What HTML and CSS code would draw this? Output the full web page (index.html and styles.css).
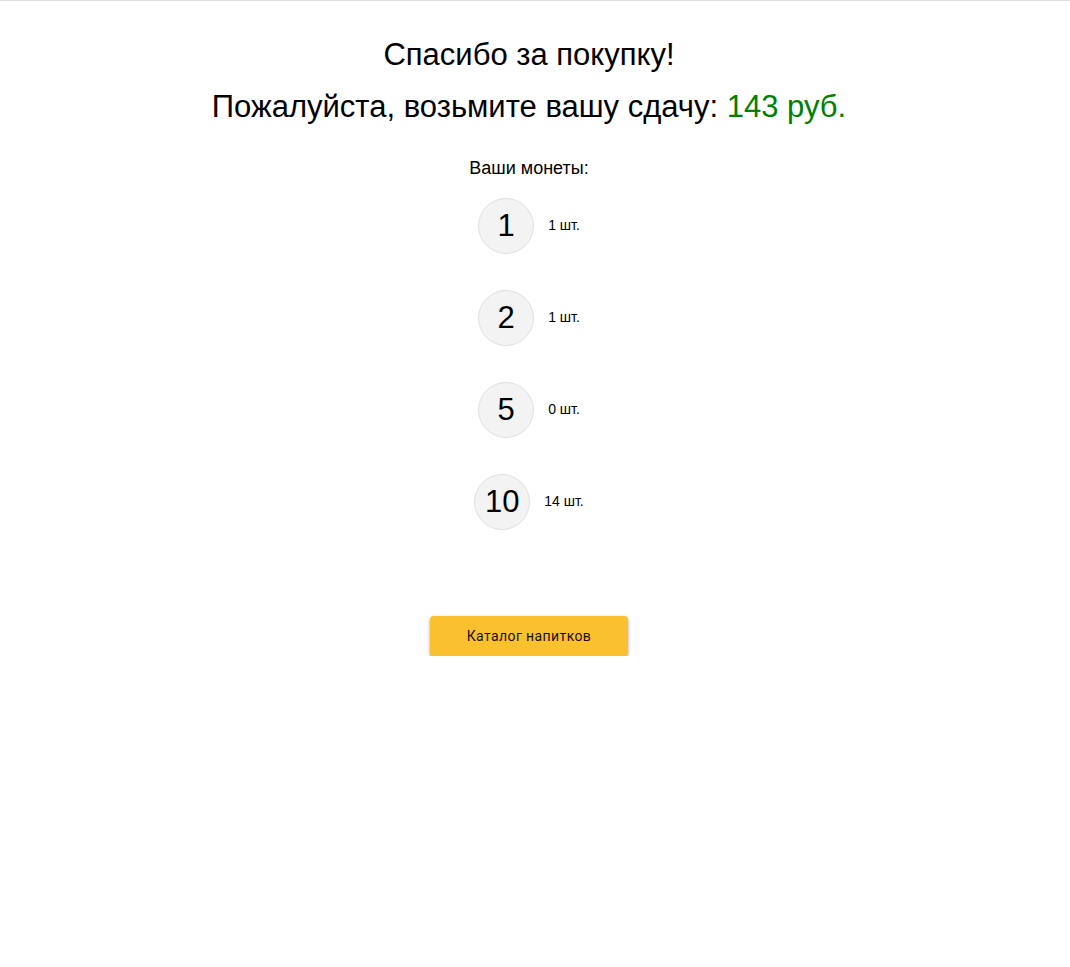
FILE: index.html
```html
<!DOCTYPE html>
<html lang="ru">
<head>
<meta charset="utf-8">
<title>Спасибо за покупку</title>
<link rel="stylesheet" href="styles.css">
</head>
<body>
<div class="topline"></div>
<main class="page">
  <h1 class="title">Спасибо за покупку!</h1>
  <h2 class="change">Пожалуйста, возьмите вашу сдачу: <span class="sum">143 руб.</span></h2>
  <p class="coins-label">Ваши монеты:</p>
  <ul class="coins">
    <li class="coin-row"><span class="coin">1</span><span class="count">1 шт.</span></li>
    <li class="coin-row"><span class="coin">2</span><span class="count">1 шт.</span></li>
    <li class="coin-row"><span class="coin">5</span><span class="count">0 шт.</span></li>
    <li class="coin-row"><span class="coin">10</span><span class="count">14 шт.</span></li>
  </ul>
  <button class="btn" type="button">Каталог напитков</button>
</main>
</body>
</html>
```
FILE: styles.css
```css
html, body {
  margin: 0;
  padding: 0;
  background: #fff;
}
body {
  font-family: "Liberation Sans", Arial, sans-serif;
  color: #000;
}
.topline {
  height: 1px;
  background: #e0e0e0;
}
.page {
  display: flex;
  flex-direction: column;
  align-items: center;
  padding: 0 12px 0 0;
}
.title {
  margin: 36px 0 0;
  font-size: 31px;
  font-weight: normal;
  line-height: 36px;
}
.change {
  margin: 16px 0 0;
  font-size: 31px;
  font-weight: normal;
  line-height: 36px;
}
.sum {
  color: #008000;
}
.coins-label {
  margin: 32px 0 0;
  font-size: 18px;
  line-height: 22px;
}
.coins {
  list-style: none;
  margin: 19px 0 0;
  padding: 0;
  display: flex;
  flex-direction: column;
  align-items: center;
  gap: 36px;
}
.coin-row {
  display: flex;
  align-items: center;
  gap: 14px;
}
.coin {
  width: 54px;
  height: 54px;
  border-radius: 50%;
  background: #f3f3f3;
  border: 1px solid #e0e0e0;
  display: flex;
  align-items: center;
  justify-content: center;
  font-size: 31px;
}
.count {
  font-size: 14px;
  margin-bottom: 2px;
}
.btn {
  margin-top: 86px;
  width: 198px;
  height: 40px;
  border: none;
  border-radius: 4px;
  background: #fbc02d;
  color: #111;
  font-family: Roboto, "Liberation Sans", sans-serif;
  font-size: 14px;
  letter-spacing: 0.4px;
  box-shadow: 0 2px 3px rgba(0,0,0,0.3), 0 1px 5px rgba(0,0,0,0.12);
  cursor: pointer;
}
```
